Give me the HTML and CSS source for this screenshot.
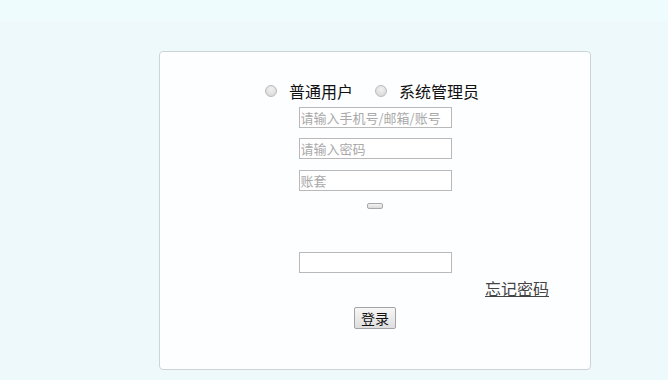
FILE: index.html
```html
<!DOCTYPE html>
<html lang="zh-CN">
<head>
  <meta charset="UTF-8" />
  <title>登录</title>
  <link rel="stylesheet" href="styles.css">
</head>
<body>

<div class="login-box">
  <div class="role-row">
    <label class="role"><input type="radio" name="role" class="role-radio"> 普通用户</label>
    <label class="role"><input type="radio" name="role" class="role-radio"> 系统管理员</label>
  </div>

  <input type="text" class="field field-first" placeholder="请输入手机号/邮箱/账号">
  <input type="password" class="field" placeholder="请输入密码">
  <input type="text" class="field field-third" placeholder="账套">

  <button type="button" class="mini-btn"></button>

  <input type="text" class="field field-code">

  <a href="#" class="forget">忘记密码</a>

  <button type="button" class="login-btn">登录</button>
</div>

</body>
</html>
```

FILE: styles.css
```css
body {
  margin: 0;
  padding: 51px 0 0 159px;
  height: 380px;
  box-sizing: border-box;
  background: linear-gradient(#effcfd 0, #effcfd 20px, #eef9fb 21px, #eef9fb 100%);
  font-family: "Noto Sans CJK SC", "Noto Sans", sans-serif;
}

.login-box {
  width: 432px;
  height: 319px;
  box-sizing: border-box;
  border: 1px solid #cdd4d8;
  border-radius: 4px;
  background-color: #fdfeff;
  display: flex;
  flex-direction: column;
  align-items: center;
  padding-top: 29px;
}

.role-row {
  display: flex;
  gap: 22px;
  margin-right: 6px;
  height: 20px;
  line-height: 20px;
  font-size: 16px;
  color: #111;
}

.role {
  display: flex;
  align-items: center;
  gap: 12px;
}

.role-radio {
  appearance: none;
  -webkit-appearance: none;
  width: 12px;
  height: 12px;
  margin: 0;
  border: 1px solid #bcbcbc;
  border-radius: 50%;
  background: radial-gradient(circle at 50% 35%, #f2f2f2 0, #dcdcdc 70%, #cfcfcf 100%);
}

.field {
  width: 153px;
  height: 21px;
  box-sizing: border-box;
  margin: 10px 0 0;
  padding: 0 1px;
  border: 1px solid #b9b9b9;
  font-family: inherit;
  font-size: 13px;
  color: #333;
  outline: none;
}

.field::placeholder {
  color: #a9a9a9;
}

.field-first {
  margin-top: 6px;
}

.field-third {
  margin-top: 11px;
}

.mini-btn {
  width: 16px;
  height: 6px;
  margin-top: 12px;
  padding: 0;
  border: 1px solid #a8a8a8;
  border-radius: 2px;
  background: linear-gradient(#f4f4f4, #dadada);
}

.field-code {
  margin-top: 43px;
}

.forget {
  align-self: flex-end;
  margin: 5px 41px 0 0;
  font-size: 16px;
  line-height: 20px;
  color: #444;
}

.login-btn {
  width: 42px;
  height: 22px;
  margin-top: 9px;
  padding: 0;
  border: 1px solid #a3a3a3;
  border-radius: 2px;
  background: linear-gradient(#f7f7f7, #dedede);
  font-family: inherit;
  font-size: 14px;
  color: #111;
}
```
